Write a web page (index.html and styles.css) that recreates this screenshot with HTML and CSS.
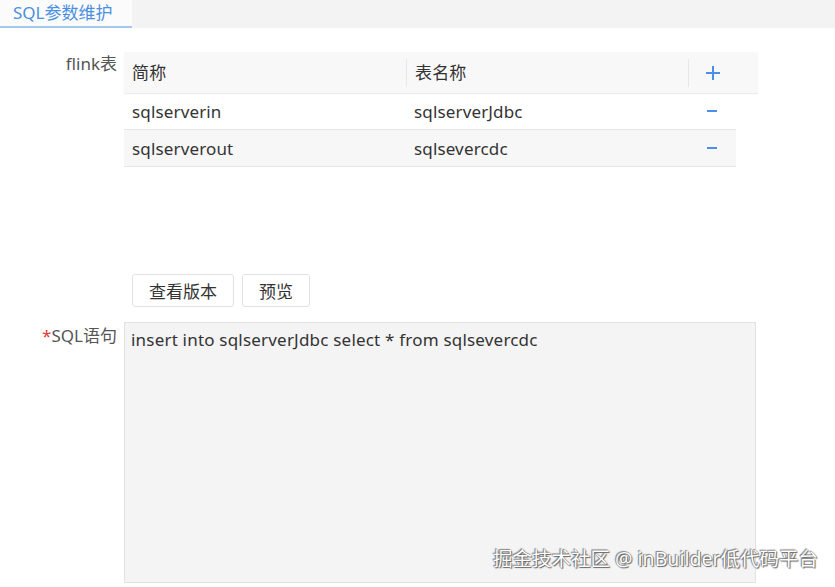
FILE: index.html
```html
<!DOCTYPE html>
<html lang="zh">
<head>
<meta charset="utf-8">
<title>SQL参数维护</title>
<link rel="stylesheet" href="styles.css">
</head>
<body>
<div class="tabs">
  <div class="tab">SQL参数维护</div>
</div>
<div class="form">
  <div class="field">
    <div class="label">flink表</div>
    <div class="table">
      <div class="thead">
        <div class="th">简称</div>
        <div class="th sep">表名称</div>
        <div class="th sep op add"><svg width="16" height="16" viewBox="0 0 16 16"><path d="M8 1v14M1 8h14" stroke="#4a8fe8" stroke-width="2" fill="none"/></svg></div>
      </div>
      <div class="tr">
        <div class="td">sqlserverin</div>
        <div class="td">sqlserverJdbc</div>
        <div class="td op"><svg width="10" height="4" viewBox="0 0 10 4"><path d="M0 2h10" stroke="#4a8fe8" stroke-width="2"/></svg></div>
      </div>
      <div class="tr alt">
        <div class="td">sqlserverout</div>
        <div class="td">sqlsevercdc</div>
        <div class="td op"><svg width="10" height="4" viewBox="0 0 10 4"><path d="M0 2h10" stroke="#4a8fe8" stroke-width="2"/></svg></div>
      </div>
    </div>
  </div>
  <div class="actions">
    <button class="btn">查看版本</button>
    <button class="btn">预览</button>
  </div>
  <div class="field sql">
    <div class="label"><span class="req">*</span>SQL语句</div>
    <div class="textarea">insert into sqlserverJdbc select * from sqlsevercdc</div>
  </div>
</div>
<div class="watermark">掘金技术社区 @ inBuilder低代码平台</div>
</body>
</html>
```
FILE: styles.css
```css
html, body {
  margin: 0;
  padding: 0;
  background: #fff;
  font-family: "Noto Sans", "Noto Sans CJK SC", sans-serif;
  color: #333;
  font-size: 17px;
}
body {
  width: 835px;
  height: 587px;
  overflow: hidden;
  position: relative;
}
.tabs {
  height: 28px;
  background: #f3f3f3;
  display: flex;
}
.tab {
  width: 132px;
  box-sizing: border-box;
  background: #fbfbfb;
  color: #4a8fe0;
  font-size: 17px;
  line-height: 25px;
  padding-left: 13px;
  border-bottom: 2px solid #a4c8ee;
}
.form {
  padding-top: 24px;
}
.field {
  display: flex;
  align-items: flex-start;
}
.label {
  width: 124px;
  box-sizing: border-box;
  padding-right: 7px;
  text-align: right;
  color: #555;
  line-height: 24px;
}
.table {
  width: 634px;
  letter-spacing: 0.15px;
}
.thead {
  display: grid;
  grid-template-columns: 282px 282px 70px;
  height: 41px;
  background: #f8f8f8;
  box-shadow: 0 1px 1px #ececec;
  align-items: center;
}
.th {
  padding-left: 8px;
  height: 28px;
  line-height: 28px;
  color: #333;
}
.th.sep {
  border-left: 1px solid #e8e8e8;
}
.op {
  display: flex;
  align-items: center;
  justify-content: center;
  padding-left: 0;
}
.th.add {
  justify-content: flex-start;
  padding-left: 16px;
}
.tr {
  display: grid;
  grid-template-columns: 282px 282px 48px;
  width: 612px;
  height: 36px;
  align-items: center;
  border-bottom: 1px solid #e6e6e6;
}
.tr.alt {
  background: #f7f7f7;
}
.td {
  padding-left: 8px;
}
.td.op {
  padding-left: 0;
}
.actions {
  display: flex;
  gap: 8px;
  margin-top: 107px;
  padding-left: 132px;
}
.btn {
  font-family: inherit;
  font-size: 17px;
  color: #333;
  background: #fff;
  border: 1px solid #e2e2e2;
  border-radius: 3px;
  height: 33px;
  padding: 0 16px;
  cursor: pointer;
}
.sql {
  margin-top: 15px;
}
.sql .label {
  padding-top: 2px;
}
.req {
  color: #e23b3b;
}
.textarea {
  width: 632px;
  height: 261px;
  box-sizing: border-box;
  background: #f4f4f4;
  border: 1px solid #e2e2e2;
  padding: 5px 6px;
  line-height: 24px;
  color: #333;
  letter-spacing: 0.2px;
}
.watermark {
  position: absolute;
  right: 17px;
  bottom: 15px;
  font-size: 19.5px;
  color: #fff;
  text-shadow: 0 0 1px #555, 1px 1px 1px #666, -1px -1px 1px #888;
}
```
